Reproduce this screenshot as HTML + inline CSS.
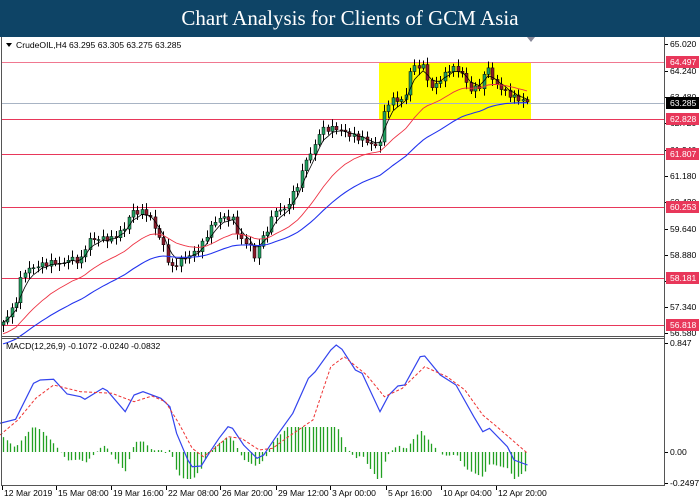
<!DOCTYPE html>
<html><head><meta charset="utf-8"><style>
body{margin:0;width:700px;height:500px;overflow:hidden;background:#fff;font-family:"Liberation Sans",sans-serif}
#hd{position:absolute;left:0;top:0;width:700px;height:37px;background:#0e4466;color:#fff;font-family:"Liberation Serif",serif;font-size:21px;text-align:center;line-height:36px;z-index:2}
svg{position:absolute;left:0;top:0}
text{font-family:"Liberation Sans",sans-serif;font-size:8.6px}
</style></head><body>
<div id="hd">Chart Analysis for Clients of GCM Asia</div>
<svg id="s" width="700" height="500" xmlns="http://www.w3.org/2000/svg">
<rect x="0" y="37" width="700" height="463" fill="#fff"/>
<rect x="379" y="63" width="152" height="56" fill="#ffff00"/>
<g id="lines"></g>
<g id="cd"></g>
<g id="ma"></g>
<g id="mc"></g>
<line x1="1.5" y1="37" x2="1.5" y2="486" stroke="#555"/>
<line x1="664.5" y1="37" x2="664.5" y2="486" stroke="#555"/>
<line x1="1" y1="336.5" x2="665" y2="336.5" stroke="#555"/>
<line x1="1" y1="338.5" x2="665" y2="338.5" stroke="#555"/>
<line x1="1" y1="485.5" x2="665" y2="485.5" stroke="#555"/>
<polygon points="527,37 535,37 531,42" fill="#889"/>
<polygon points="6,43 12,43 9,47" fill="#000"/>
<text x="16" y="48" fill="#000">CrudeOIL,H4  63.295 63.305 63.275 63.285</text>
<text x="6" y="349" fill="#000">MACD(12,26,9) -0.1072 -0.0240 -0.0832</text>
<g id="ax"></g>
</svg>
<script>
(function(){
var NS="http://www.w3.org/2000/svg";
function el(p,t,a,tx){var e=document.createElementNS(NS,t);for(var k in a)e.setAttribute(k,a[k]);if(tx!=null)e.textContent=tx;document.getElementById(p).appendChild(e);return e;}
[[62,'#f07890'],[119,'#e8375a'],[154,'#e8375a'],[207,'#e8375a'],[278,'#e8375a'],[325,'#e8375a']].forEach(function(l){el('lines','line',{x1:1,x2:665,y1:l[0]+.5,y2:l[0]+.5,stroke:l[1]});});
el('lines','line',{x1:1,x2:665,y1:103.5,y2:103.5,stroke:'#a8b4c4'});
var P=[[3,322],[15,305],[22,272],[40,265],[55,262],[60,265],[70,258],[80,262],[88,240],[105,238],[110,240],[125,228],[130,212],[145,212],[150,218],[165,250],[170,270],[180,260],[190,255],[200,248],[210,228],[218,218],[232,218],[240,240],[250,245],[255,262],[258,245],[265,235],[275,210],[285,210],[295,190],[300,180],[305,160],[310,155],[315,145],[320,130],[335,128],[340,130],[350,135],[365,140],[375,147],[380,140],[385,108],[390,100],[405,100],[410,70],[420,65],[425,68],[430,90],[440,80],[450,68],[460,70],[470,90],[480,86],[488,66],[492,80],[505,92],[515,98],[527,102]];
function interp(A,x){for(var i=1;i<A.length;i++){if(x<=A[i][0]){var a=A[i-1],b=A[i];return a[1]+(b[1]-a[1])*(x-a[0])/(b[0]-a[0]);}}return A[A.length-1][1];}
var N=122,xs=[],cl=[];
for(var i=0;i<N;i++){var x=3+i*(524/(N-1));xs.push(x);cl.push(interp(P,x)+Math.sin(i*2.7)*2.5);}
var prev=cl[0]+3;
for(var i=0;i<N;i++){var o=prev,c=cl[i];var hi=Math.min(o,c)-2-Math.abs(Math.sin(i*1.3))*5,lo=Math.max(o,c)+2+Math.abs(Math.cos(i*1.7))*5;
var x=Math.round(xs[i])+.5;
el('cd','line',{x1:x,x2:x,y1:hi,y2:lo,stroke:'#000','stroke-width':1});
var ty=Math.min(o,c),h=Math.max(1,Math.abs(o-c));
el('cd','rect',{x:x-1.5,y:ty,width:3,height:h,fill:c<o?'#20a060':'#8b1a2a',stroke:'#000','stroke-width':.5});
prev=c;}
function ema(n,seed){var k=2/(n+1),v=seed,r=[];for(var i=0;i<N;i++){v=v+(cl[i]-v)*k;r.push(v);}return r;}
function pl(arr,col,w){var d='';for(var i=0;i<N;i++)d+=(i?'L':'M')+xs[i].toFixed(1)+','+arr[i].toFixed(1);el('ma','path',{d:d,fill:'none',stroke:col,'stroke-width':w});}
pl(ema(4,cl[0]),'#000',0.8);pl(ema(20,335),'#ee3344',0.9);pl(ema(40,345),'#2233ee',1.1);
var B=[[0,310],[35,298],[75,190],[90,180],[120,178],[150,222],[180,230],[190,238],[230,205],[240,212],[280,275],[300,225],[320,215],[360,235],[380,260],[395,340],[420,420],[430,440],[450,438],[470,395],[490,355],[510,320],[520,325],[545,375],[575,415],[590,405],[615,355],[655,280],[690,175],[705,155],[740,90],[752,75],[765,88],[795,150],[810,160],[850,275],[870,225],[890,198],[905,195],[940,110],[950,108],[985,165],[1020,195],[1060,290],[1080,335],[1095,325],[1135,380],[1150,420],[1180,435]];
var R=[[0,345],[40,300],[80,235],[120,195],[180,215],[250,220],[300,245],[340,228],[370,245],[400,310],[430,385],[455,410],[480,385],[510,350],[540,355],[580,390],[610,385],[640,355],[700,300],[740,140],[770,110],[820,165],[860,230],[900,205],[950,140],[1000,170],[1040,210],[1080,285],[1120,330],[1180,400]];
function cv(A){return A.map(function(p){return [p[0]/2.237,320+p[1]/3];});}
var Bc=cv(B),Rc=cv(R);
for(var x=3;x<=527;x+=3.6){var h=(interp(Rc,x)-interp(Bc,x))*1.5;h=Math.max(-27,Math.min(25,h));var xx=Math.round(x)+.5;
el('mc','line',{x1:xx,x2:xx,y1:452,y2:452-h,stroke:'#22a022','stroke-width':1.3});}
el('mc','path',{d:'M'+Bc.map(function(p){return p[0].toFixed(1)+','+p[1].toFixed(1)}).join('L'),fill:'none',stroke:'#3344ee','stroke-width':1.2});
el('mc','path',{d:'M'+Rc.map(function(p){return p[0].toFixed(1)+','+p[1].toFixed(1)}).join('L'),fill:'none',stroke:'#ee3333','stroke-width':1,'stroke-dasharray':'3,2'});
[['65.020',44],['64.240',71],['63.480',97],['62.720',123],['61.940',150],['61.180',176],['60.420',202],['59.640',229],['58.880',255],['58.120',281],['57.340',307],['56.580',333],['0.847',343],['0.00',452],['-0.2497',483]].forEach(function(a){
el('ax','line',{x1:665,x2:668,y1:a[1]+.5,y2:a[1]+.5,stroke:'#000'});el('ax','text',{x:670,y:a[1]+3,fill:'#000'},a[0]);});
[['64.497',62,'#e8375a'],['62.828',119,'#e8375a'],['61.807',154,'#e8375a'],['60.253',207,'#e8375a'],['58.181',278,'#e8375a'],['56.818',325,'#e8375a'],['63.285',103,'#000']].forEach(function(a){
el('ax','rect',{x:666,y:a[1]-6,width:33,height:12,fill:a[2]});el('ax','text',{x:670,y:a[1]+3,fill:'#fff'},a[0]);});
[['12 Mar 2019',2],['15 Mar 08:00',56],['19 Mar 16:00',111],['22 Mar 08:00',166],['26 Mar 20:00',220],['29 Mar 12:00',276],['3 Apr 00:00',330],['5 Apr 16:00',386],['10 Apr 04:00',441],['12 Apr 20:00',496]].forEach(function(a){
el('ax','line',{x1:a[1]+.5,x2:a[1]+.5,y1:486,y2:490,stroke:'#000'});el('ax','text',{x:a[1]+2,y:496,fill:'#000'},a[0]);});
})();
</script>
</body></html>
